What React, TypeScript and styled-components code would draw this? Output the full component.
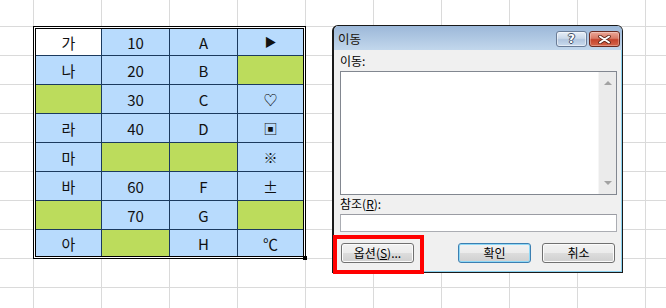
import { createGlobalStyle, styled } from 'styled-components'

type Fill = 'white' | 'blue' | 'green'

type CellData = {
  text?: string
  fill?: Fill
  size?: number
}

const rows: CellData[][] = [
  [{ text: '가', fill: 'white' }, { text: '10' }, { text: 'A' }, { text: '▶', size: 12 }],
  [{ text: '나' }, { text: '20' }, { text: 'B' }, { fill: 'green' }],
  [{ fill: 'green' }, { text: '30' }, { text: 'C' }, { text: '♡', size: 14 }],
  [{ text: '라' }, { text: '40' }, { text: 'D' }, { text: '▣', size: 14 }],
  [{ text: '마' }, { fill: 'green' }, { fill: 'green' }, { text: '※', size: 14 }],
  [{ text: '바' }, { text: '60' }, { text: 'F' }, { text: '±' }],
  [{ fill: 'green' }, { text: '70' }, { text: 'G' }, { fill: 'green' }],
  [{ text: '아' }, { fill: 'green' }, { text: 'H' }, { text: '℃' }],
]

const fillColors: Record<Fill, string> = {
  white: '#ffffff',
  blue: '#b8dbfd',
  green: '#bcdc5c',
}

const App = () => {
  return (
    <>
      <GlobalStyle />
      <Sheet>
        <TableFrame>
          <Table>
            {rows.map((row, r) =>
              row.map((cell, c) => (
                <Cell
                  key={`${r}-${c}`}
                  $fill={cell.fill ?? 'blue'}
                  $size={cell.size}
                >
                  {cell.text}
                </Cell>
              ))
            )}
          </Table>
          <FillHandle />
        </TableFrame>

        <Dialog>
          <TitleBar>
            <Title>이동</Title>
            <TitleButtons>
              <HelpButton>?</HelpButton>
              <CloseButton>
                <svg width="13" height="9" viewBox="0 0 13 9">
                  <path
                    d="M2 1.5 L11 7.5 M11 1.5 L2 7.5"
                    stroke="#5a2418"
                    strokeWidth="3.6"
                    strokeLinecap="round"
                  />
                  <path
                    d="M2 1.5 L11 7.5 M11 1.5 L2 7.5"
                    stroke="#ffffff"
                    strokeWidth="2"
                    strokeLinecap="round"
                  />
                </svg>
              </CloseButton>
            </TitleButtons>
          </TitleBar>
          <DialogBody>
            <FieldLabel>이동:</FieldLabel>
            <ListBox>
              <ScrollTrack>
                <ScrollArrow $dir="up" />
                <ScrollArrow $dir="down" />
              </ScrollTrack>
            </ListBox>
            <FieldLabel $gap={1}>
              참조(<u>R</u>):
            </FieldLabel>
            <TextInput />
            <ButtonRow>
              <PushButton>
                옵션(<u>S</u>)...
              </PushButton>
              <ButtonGroup>
                <PushButton $isDefault>확인</PushButton>
                <PushButton>취소</PushButton>
              </ButtonGroup>
            </ButtonRow>
          </DialogBody>
        </Dialog>

        <Highlight />
      </Sheet>
    </>
  )
}

const GlobalStyle = createGlobalStyle`
  html, body {
    margin: 0;
    padding: 0;
    background: #ffffff;
  }
  body {
    font-family: "Noto Sans CJK KR", "Noto Sans", sans-serif;
  }
`

const Sheet = styled.div`
  position: relative;
  width: 666px;
  height: 308px;
  overflow: hidden;
  box-sizing: border-box;
  padding: 26px 0 0 33px;
  background-color: #ffffff;
  background-image: linear-gradient(to right, #dadada 1px, transparent 1px),
    linear-gradient(to bottom, #dadada 1px, transparent 1px);
  background-size: 68px 29px;
  background-position: 33px 26px;
`

const TableFrame = styled.div`
  position: relative;
  width: fit-content;
  border: 1px solid #000000;
  padding: 1px;
  background: #ffffff;
`

const Table = styled.div`
  display: grid;
  grid-template-columns: 65px 67px 67px 65px;
  grid-template-rows: 26px repeat(6, 28px) 26px;
  gap: 1px;
  border: 1px solid #000000;
  background: #1b3a5e;
`

const Cell = styled.div<{ $fill: Fill; $size?: number }>`
  display: flex;
  align-items: center;
  justify-content: center;
  background: ${({ $fill }) => fillColors[$fill]};
  color: #111111;
  font-family: "Noto Sans CJK KR", sans-serif;
  font-size: ${({ $size = 15 }) => $size}px;
  line-height: 1;
`

const FillHandle = styled.div`
  position: absolute;
  right: -2px;
  bottom: -2px;
  width: 4px;
  height: 4px;
  background: #000000;
`

const Dialog = styled.div`
  position: absolute;
  left: 332px;
  top: 25px;
  width: 291px;
  height: 248px;
  box-sizing: border-box;
  display: flex;
  flex-direction: column;
  border: 1px solid #1a1a1a;
  border-left: 2px solid #1a1a1a;
  border-radius: 6px 6px 0 0;
  background: #f0f0f0;
  box-shadow: inset -1px -1px 0 #8ad2f0;
  overflow: hidden;
  font-size: 12px;
  color: #000000;
`

const TitleBar = styled.div`
  height: 24px;
  flex: none;
  display: flex;
  align-items: flex-start;
  justify-content: space-between;
  padding: 0 2px 0 4px;
  background: linear-gradient(#9cb8d9, #c2d7ec);
`

const Title = styled.div`
  margin-top: 5px;
  font-size: 12.5px;
  line-height: 16px;
  color: #1a1208;
`

const TitleButtons = styled.div`
  display: flex;
  gap: 2px;
  margin-top: 5px;
`

const HelpButton = styled.div`
  width: 31px;
  height: 16px;
  box-sizing: border-box;
  display: flex;
  align-items: center;
  justify-content: center;
  border: 1px solid #6a7c96;
  border-radius: 3px;
  background: linear-gradient(#e6eef7 0%, #cbd9ea 45%, #b2c6df 55%, #cadbee 100%);
  box-shadow: inset 0 0 0 1px rgba(255, 255, 255, 0.5);
  color: #ffffff;
  font-family: "DejaVu Sans", sans-serif;
  font-weight: bold;
  font-size: 12px;
  line-height: 1;
  text-shadow: -1px 0 #3f4f66, 1px 0 #3f4f66, 0 -1px #3f4f66, 0 1px #3f4f66;
`

const CloseButton = styled.div`
  width: 31px;
  height: 16px;
  box-sizing: border-box;
  display: flex;
  align-items: center;
  justify-content: center;
  border: 1px solid #6a2a20;
  border-radius: 3px;
  background: linear-gradient(#eba898 0%, #d97a66 45%, #c4432c 55%, #d6664b 100%);
  box-shadow: inset 0 0 0 1px rgba(255, 255, 255, 0.3);
`

const DialogBody = styled.div`
  flex: 1;
  display: flex;
  flex-direction: column;
  padding: 3px 5px 0 6px;
`

const FieldLabel = styled.div<{ $gap?: number }>`
  height: 16px;
  line-height: 16px;
  margin-top: ${({ $gap = 0 }) => $gap}px;
  font-size: 12px;
  u {
    text-underline-offset: 1px;
  }
`

const ListBox = styled.div`
  margin-top: 2px;
  height: 124px;
  box-sizing: border-box;
  display: flex;
  justify-content: flex-end;
  border: 1px solid #828790;
  background: #ffffff;
`

const ScrollTrack = styled.div`
  width: 17px;
  display: flex;
  flex-direction: column;
  justify-content: space-between;
  align-items: center;
  padding: 9px 0 9px;
  background: #ebebeb;
  border-left: 1px solid #f6f6f6;
`

const ScrollArrow = styled.div<{ $dir: 'up' | 'down' }>`
  width: 0;
  height: 0;
  border-left: 4px solid transparent;
  border-right: 4px solid transparent;
  ${({ $dir }) =>
    $dir === 'up'
      ? 'border-bottom: 4px solid #a2a2a2;'
      : 'border-top: 4px solid #a2a2a2;'}
`

const TextInput = styled.div`
  margin-top: 2px;
  height: 18px;
  box-sizing: border-box;
  border: 1px solid #abadb3;
  border-top-color: #9a9ca3;
  background: #ffffff;
`

const ButtonRow = styled.div`
  margin-top: 11px;
  display: flex;
  justify-content: space-between;
  padding: 0 2px 0 1px;
`

const ButtonGroup = styled.div`
  display: flex;
  gap: 11px;
`

const PushButton = styled.div<{ $isDefault?: boolean }>`
  width: 73px;
  height: 20px;
  box-sizing: border-box;
  display: flex;
  align-items: center;
  justify-content: center;
  border: 1px solid ${({ $isDefault }) => ($isDefault ? '#3c7fb1' : '#707070')};
  border-radius: 3px;
  background: linear-gradient(#f2f2f2 0%, #ebebeb 50%, #dddddd 50%, #cfcfcf 100%);
  box-shadow: inset 0 0 0 1px
    ${({ $isDefault }) => ($isDefault ? '#8fd8f6' : '#fbfbfb')};
  font-size: 12px;
  line-height: 1;
  u {
    text-underline-offset: 1px;
  }
`

const Highlight = styled.div`
  position: absolute;
  left: 333px;
  top: 235px;
  width: 91px;
  height: 39px;
  box-sizing: border-box;
  border: 4px solid #ff0000;
`

export default App
